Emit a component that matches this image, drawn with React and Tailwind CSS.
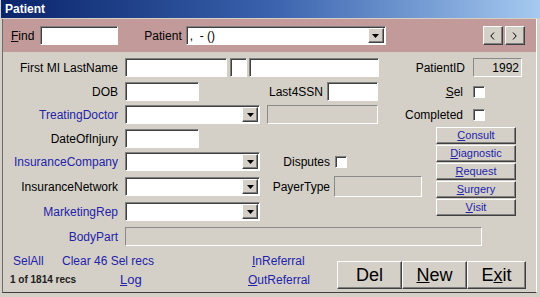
import React from "react";

// classic 3D borders
const sunken =
  "bg-white border border-t-[#808080] border-l-[#808080] border-b-white border-r-white shadow-[inset_1px_1px_0_#404040]";
const raised =
  "bg-[#d4d0c8] border border-t-white border-l-white border-b-[#404040] border-r-[#404040] shadow-[inset_-1px_-1px_0_#808080]";
const flat =
  "bg-[#d4d0c8] border border-t-[#8a8a8a] border-l-[#8a8a8a] border-b-white border-r-white";

const blue = "text-[#2323a8]";

function Label({ children, className = "" }) {
  return <div className={`w-[115px] text-right text-[12px] leading-none ${className}`}>{children}</div>;
}

function DropButton() {
  return (
    <div className={`${raised} w-[16px] h-[15px] flex items-center justify-center`}>
      <svg width="7" height="4" viewBox="0 0 7 4">
        <path d="M0 0h7L3.5 4z" fill="#000" />
      </svg>
    </div>
  );
}

function Combo({ width, text = "" }) {
  return (
    <div className={`${sunken} h-[19px] flex items-center pr-[1px]`} style={{ width }}>
      <div className="flex-1 pl-[3px] text-[12px] leading-none whitespace-pre">{text}</div>
      <DropButton />
    </div>
  );
}

function Check() {
  return <div className={`${sunken} w-[12px] h-[12px]`} />;
}

function SideButton({ first, rest }) {
  return (
    <div className={`${raised} h-[17px] flex items-center justify-center text-[11px] leading-none ${blue}`}>
      <span className="underline">{first}</span>
      {rest}
    </div>
  );
}

function BigButton({ children, width }) {
  return (
    <div
      className={`${raised} h-[28px] flex items-center justify-center text-[18px] leading-none text-black`}
      style={{ width }}
    >
      {children}
    </div>
  );
}

function Chevron({ left }) {
  return (
    <svg width="5" height="8" viewBox="0 0 5 8">
      <path d={left ? "M4 0.5L0.8 4L4 7.5" : "M1 0.5L4.2 4L1 7.5"} stroke="#000" strokeWidth="1" fill="none" />
    </svg>
  );
}

export default function App() {
  return (
    <div className="w-[540px] h-[297px] bg-[#d4d0c8] font-['Liberation_Sans',Arial,sans-serif] text-black overflow-hidden">
      {/* title bar */}
      <div className="h-[18px] ml-[1px] flex items-center pl-[4px] bg-gradient-to-r from-[#0a246a] via-[#3a62ad] to-[#a6caf0]">
        <span className="text-white font-bold text-[12px] leading-none">Patient</span>
      </div>

      <div className="ml-[2px] mr-[3px] h-[274px] border-l border-b border-l-[#6c6c6c] border-b-[#404040] border-r border-r-white">
        {/* search band */}
        <div className="mt-[1px] h-[33px] bg-[#c29a9a] flex items-center">
          <div className="ml-[8px] text-[12px] leading-none">
            <span className="underline">F</span>ind
          </div>
          <div className={`${sunken} ml-[6px] w-[78px] h-[19px]`} />
          <div className="ml-[26px] text-[12px] leading-none">Patient</div>
          <div className="ml-[4px]">
            <Combo width={200} text=",  - ()" />
          </div>
          <div className={`${raised} ml-[97px] w-[20px] h-[19px] flex items-center justify-center`}>
            <Chevron left />
          </div>
          <div className={`${raised} ml-[2px] w-[20px] h-[19px] flex items-center justify-center`}>
            <Chevron />
          </div>
        </div>

        {/* form body */}
        <div className="pt-[6px]">
          <div className="flex items-center h-[19px]">
            <Label>First MI LastName</Label>
            <div className={`${sunken} ml-[7px] w-[102px] h-[19px]`} />
            <div className={`${sunken} ml-[3px] w-[17px] h-[19px]`} />
            <div className={`${sunken} ml-[2px] w-[130px] h-[19px]`} />
            <div className="w-[86px] text-right text-[12px] leading-none">PatientID</div>
            <div className={`${flat} ml-[8px] w-[49px] h-[19px] flex items-center justify-end pr-[2px] text-[12px] leading-none`}>
              1992
            </div>
          </div>

          <div className="flex items-center h-[19px] mt-[5px]">
            <Label>DOB</Label>
            <div className={`${sunken} ml-[7px] w-[74px] h-[19px]`} />
            <div className="w-[124px] text-right text-[12px] leading-none">Last4SSN</div>
            <div className={`${sunken} ml-[4px] w-[51px] h-[19px]`} />
            <div className="w-[85px] text-right text-[12px] leading-none">
              <span className="underline">S</span>el
            </div>
            <div className="ml-[10px]">
              <Check />
            </div>
          </div>

          <div className="flex items-center h-[19px] mt-[4px]">
            <Label className={blue}>TreatingDoctor</Label>
            <div className="ml-[7px]">
              <Combo width={135} />
            </div>
            <div className={`${flat} ml-[7px] w-[111px] h-[19px]`} />
            <div className="w-[85px] text-right text-[12px] leading-none">Completed</div>
            <div className="ml-[10px]">
              <Check />
            </div>
          </div>

          <div className="flex mt-[3px]">
            <div className="w-[433px] pt-[2px]">
              <div className="flex items-center h-[19px]">
                <Label>DateOfInjury</Label>
                <div className={`${sunken} ml-[7px] w-[74px] h-[19px]`} />
              </div>
              <div className="flex items-center h-[19px] mt-[4px]">
                <Label className={blue}>InsuranceCompany</Label>
                <div className="ml-[7px]">
                  <Combo width={135} />
                </div>
                <div className="w-[70px] text-right text-[12px] leading-none">Disputes</div>
                <div className="ml-[5px]">
                  <Check />
                </div>
              </div>
              <div className="flex items-center h-[19px] mt-[6px]">
                <Label>InsuranceNetwork</Label>
                <div className="ml-[7px]">
                  <Combo width={135} />
                </div>
                <div className="w-[70px] text-right text-[12px] leading-none">PayerType</div>
                <div className={`${flat} ml-[4px] w-[88px] h-[21px]`} />
              </div>
              <div className="flex items-center h-[19px] mt-[6px]">
                <Label className={blue}>MarketingRep</Label>
                <div className="ml-[7px]">
                  <Combo width={135} />
                </div>
              </div>
            </div>
            <div className="w-[80px] flex flex-col gap-[1px]">
              <SideButton first="C" rest="onsult" />
              <SideButton first="D" rest="iagnostic" />
              <SideButton first="R" rest="equest" />
              <SideButton first="S" rest="urgery" />
              <SideButton first="V" rest="isit" />
            </div>
          </div>

          <div className="flex items-center h-[19px] mt-[6px]">
            <Label className={blue}>BodyPart</Label>
            <div className={`${flat} ml-[7px] w-[357px] h-[19px]`} />
          </div>

          {/* footer */}
          <div className="flex items-end mt-[5px]">
            <div className="w-[334px]">
              <div className={`flex items-center h-[19px] text-[12px] leading-none ${blue}`}>
                <div className="ml-[10px] w-[49px]">SelAll</div>
                <div className="w-[190px]">Clear 46 Sel recs</div>
                <div>
                  <span className="underline">I</span>nReferral
                </div>
              </div>
              <div className="flex items-center h-[19px] leading-none">
                <div className="ml-[7px] w-[110px] text-[10px] font-bold text-[#202020]">1 of 1814 recs</div>
                <div className={`w-[128px] text-[13px] ${blue}`}>
                  <span className="underline">L</span>og
                </div>
                <div className={`text-[12px] ${blue}`}>
                  <span className="underline">O</span>utReferral
                </div>
              </div>
            </div>
            <div className="flex">
              <BigButton width={65}>Del</BigButton>
              <BigButton width={65}>
                <span className="underline">N</span>ew
              </BigButton>
              <BigButton width={59}>
                E<span className="underline">x</span>it
              </BigButton>
            </div>
          </div>
        </div>
      </div>
    </div>
  );
}
